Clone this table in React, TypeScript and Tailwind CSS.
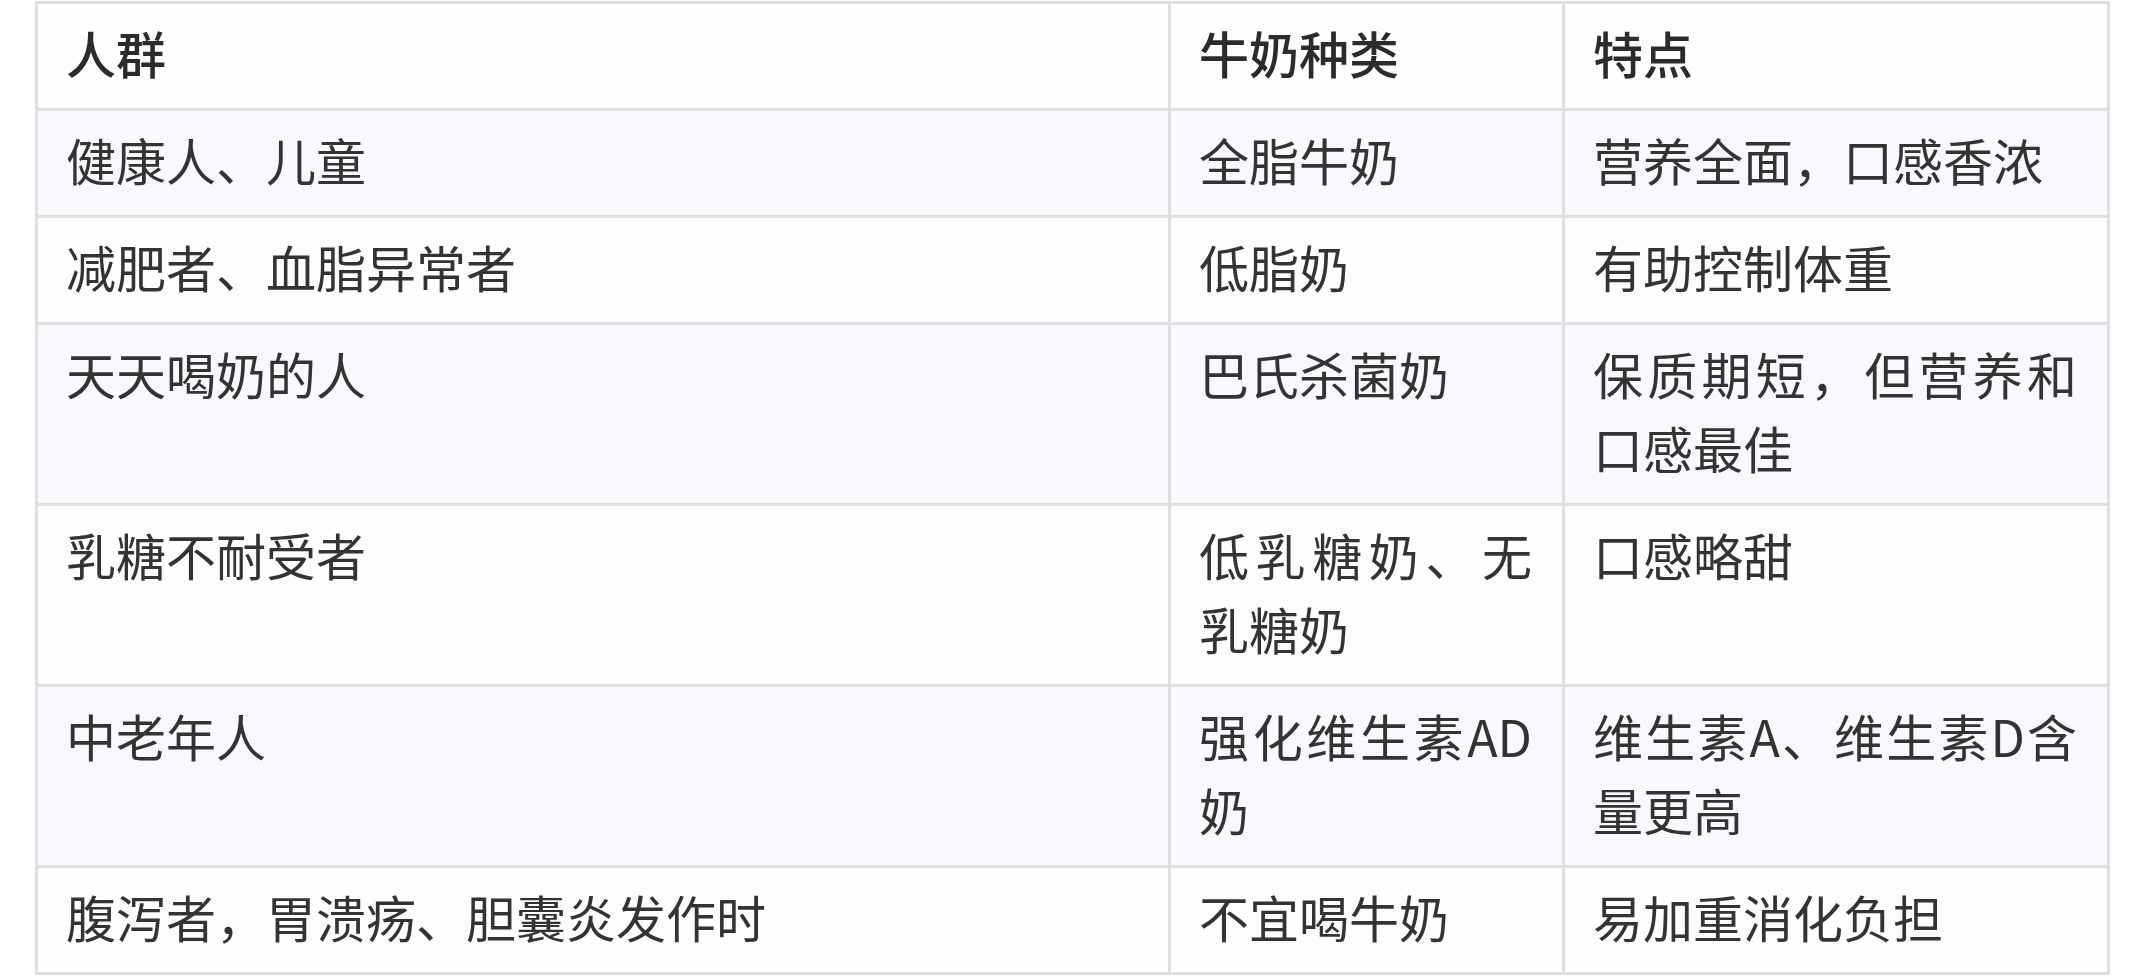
import React from "react";

const rows = [
  { group: "健康人、儿童", milk: "全脂牛奶", note: "营养全面，口感香浓" },
  { group: "减肥者、血脂异常者", milk: "低脂奶", note: "有助控制体重" },
  { group: "天天喝奶的人", milk: "巴氏杀菌奶", note: "保质期短，但营养和口感最佳" },
  { group: "乳糖不耐受者", milk: "低乳糖奶、无乳糖奶", note: "口感略甜" },
  { group: "中老年人", milk: "强化维生素AD奶", note: "维生素A、维生素D含量更高" },
  { group: "腹泻者，胃溃疡、胆囊炎发作时", milk: "不宜喝牛奶", note: "易加重消化负担" },
];

const cell = "border-[3px] border-[#dedfe1] pl-[28px] pr-[30px] pt-[11px] pb-[19px] align-top text-justify";

export default function App() {
  return (
    <div className="min-h-screen bg-white pt-px pl-[35px] font-['Noto_Sans_CJK_SC','Noto_Sans',sans-serif] text-[50px] leading-[74px] text-[#333333]">
      <table className="w-[2072px] table-fixed border-collapse">
        <colgroup>
          <col className="w-[1133px]" />
          <col className="w-[394px]" />
          <col className="w-[545px]" />
        </colgroup>
        <thead>
          <tr className="bg-[#fdfdfe]">
            <th className={`${cell} text-left font-medium text-[#2b2b2b]`}>人群</th>
            <th className={`${cell} text-left font-medium text-[#2b2b2b]`}>牛奶种类</th>
            <th className={`${cell} text-left font-medium text-[#2b2b2b]`}>特点</th>
          </tr>
        </thead>
        <tbody>
          {rows.map((r, i) => (
            <tr key={r.group} className={i % 2 === 0 ? "bg-[#f7f9fd]" : "bg-[#fdfdfe]"}>
              <td className={cell}>{r.group}</td>
              <td className={cell}>{r.milk}</td>
              <td className={cell}>{r.note}</td>
            </tr>
          ))}
        </tbody>
      </table>
    </div>
  );
}
